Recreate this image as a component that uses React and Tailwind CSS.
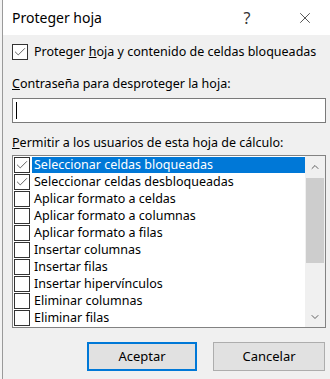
import { Check, X, ChevronUp, ChevronDown } from "lucide-react";

const items = [
  { label: "Seleccionar celdas bloqueadas", checked: true, selected: true },
  { label: "Seleccionar celdas desbloqueadas", checked: true },
  { label: "Aplicar formato a celdas" },
  { label: "Aplicar formato a columnas" },
  { label: "Aplicar formato a filas" },
  { label: "Insertar columnas" },
  { label: "Insertar filas" },
  { label: "Insertar hipervínculos" },
  { label: "Eliminar columnas" },
  { label: "Eliminar filas" },
];

function Box({ checked }) {
  return (
    <div className="flex h-[16px] w-[16px] shrink-0 items-center justify-center border border-[#333] bg-white">
      {checked && <Check size={14} strokeWidth={1.3} className="text-[#333]" />}
    </div>
  );
}

export default function App() {
  return (
    <div
      className="flex h-[379px] w-[330px] overflow-hidden bg-[#f0f0f0] text-[12.5px] text-black"
      style={{ fontFamily: '"Noto Sans", "Open Sans", sans-serif' }}
    >
      <div className="w-[3px] shrink-0 border-r border-[#9a9a9a] bg-[#f3f3f3]" />
      <div className="flex flex-1 flex-col">
        <div className="flex h-[35px] items-center bg-white pl-[9px]">
          <span className="flex-1 text-[14px]">Proteger hoja</span>
          <span className="mr-[23px] w-[20px] text-center text-[16px] text-[#333]">?</span>
          <div className="flex w-[50px] justify-center">
            <X size={18} strokeWidth={1.1} className="text-[#333]" />
          </div>
        </div>

        <div className="flex flex-col pl-[9px] pr-[4px]">
          <label className="mt-[8px] flex items-center gap-[6px]">
            <Box checked />
            <span>
              Proteger <u>h</u>oja y contenido de celdas bloqueadas
            </span>
          </label>

          <p className="mt-[14px] leading-[16px]">
            <u>C</u>ontraseña para desproteger la hoja:
          </p>
          <div className="mt-[6px] flex h-[25px] items-center border border-[#7a7a7a] bg-white px-[3px]">
            <div className="h-[17px] w-px bg-black" />
          </div>

          <p className="mt-[12px] leading-[16px]">
            <u>P</u>ermitir a los usuarios de esta hoja de cálculo:
          </p>
          <div className="mt-[4px] flex h-[173px] border border-[#828282] bg-white">
            <div className="flex flex-1 flex-col pl-[1px] pt-[1px]">
              {items.map((it) => (
                <div key={it.label} className="flex h-[17px] items-center gap-[2px]">
                  <Box checked={it.checked} />
                  <span
                    className={`flex h-[16px] flex-1 items-center pl-[2px] ${
                      it.selected ? "bg-[#0078d7] text-white" : ""
                    }`}
                  >
                    {it.label}
                  </span>
                </div>
              ))}
            </div>
            <div className="flex w-[20px] flex-col items-center bg-[#f0f0f0]">
              <div className="flex h-[22px] items-center">
                <ChevronUp size={12} strokeWidth={2} className="text-[#606060]" />
              </div>
              <div className="h-[85px] w-[18px] bg-[#cdcdcd]" />
              <div className="flex-1" />
              <div className="flex h-[20px] items-center">
                <ChevronDown size={12} strokeWidth={2} className="text-[#606060]" />
              </div>
            </div>
          </div>

          <div className="mt-[14px] flex justify-end gap-[16px] pr-[1px]">
            <button className="h-[29px] w-[110px] border-2 border-[#0078d7] bg-[#e1e1e1] text-[13px]">
              Aceptar
            </button>
            <button className="h-[29px] w-[112px] border border-[#adadad] bg-[#e1e1e1] text-[13px]">
              Cancelar
            </button>
          </div>
        </div>
      </div>
    </div>
  );
}
